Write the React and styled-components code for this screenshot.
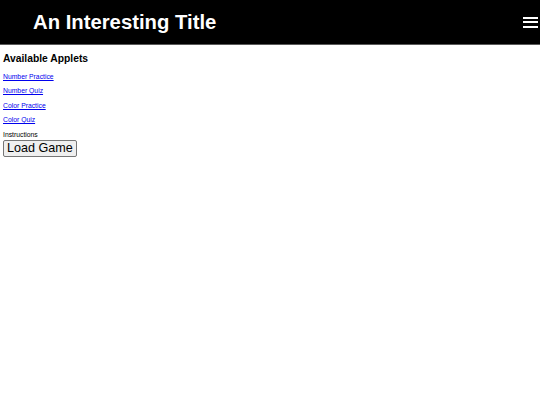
import React from "react";
import styled, { createGlobalStyle } from "styled-components";

const Global = createGlobalStyle`
  html, body { margin: 0; padding: 0; background: #fff; }
  body { font-family: "Liberation Sans", Arial, sans-serif; color: #000; }
`;

const Header = styled.header`
  height: 44px;
  background: #000;
  border-bottom: 1px solid #5a5a5a;
  display: flex;
  align-items: center;
  justify-content: space-between;
  padding: 0 2px 0 33px;
`;

const Title = styled.h1`
  margin: 0;
  font-size: 20.3px;
  font-weight: bold;
  color: #fff;
`;

const Burger = styled.button`
  background: none;
  border: 0;
  padding: 0;
  width: 15px;
  display: flex;
  flex-direction: column;
  gap: 2.5px;
  cursor: pointer;
`;

const Bar = styled.span`
  display: block;
  height: 2px;
  background: #fff;
`;

const Main = styled.main`
  padding: 0 3px;
`;

const Heading = styled.h3`
  margin: 8px 0 9px;
  font-size: 10.3px;
  font-weight: bold;
`;

const LinkRow = styled.p`
  margin: 6.33px 0;
  font-size: 6.8px;
  line-height: 8px;
`;

const AppletLink = styled.a`
  color: #0000ee;
  text-decoration: underline;
`;

const Label = styled.div`
  font-size: 6.8px;
  line-height: 7px;
  margin-top: 6.6px;
`;

const Button = styled.button`
  font-family: "Liberation Sans", Arial, sans-serif;
  font-size: 12.6px;
  line-height: 15px;
  padding: 0 3px;
  margin: 0;
  background: #efefef;
  border: 1px solid #767676;
  border-radius: 2px;
  color: #000;
`;

const applets = ["Number Practice", "Number Quiz", "Color Practice", "Color Quiz"];

export default function App() {
  return (
    <>
      <Global />
      <Header>
        <Title>An Interesting Title</Title>
        <Burger aria-label="Menu">
          <Bar />
          <Bar />
          <Bar />
        </Burger>
      </Header>
      <Main>
        <Heading>Available Applets</Heading>
        {applets.map((a) => (
          <LinkRow key={a}>
            <AppletLink href="#">{a}</AppletLink>
          </LinkRow>
        ))}
        <Label>Instructions</Label>
        <Button>Load Game</Button>
      </Main>
    </>
  );
}
